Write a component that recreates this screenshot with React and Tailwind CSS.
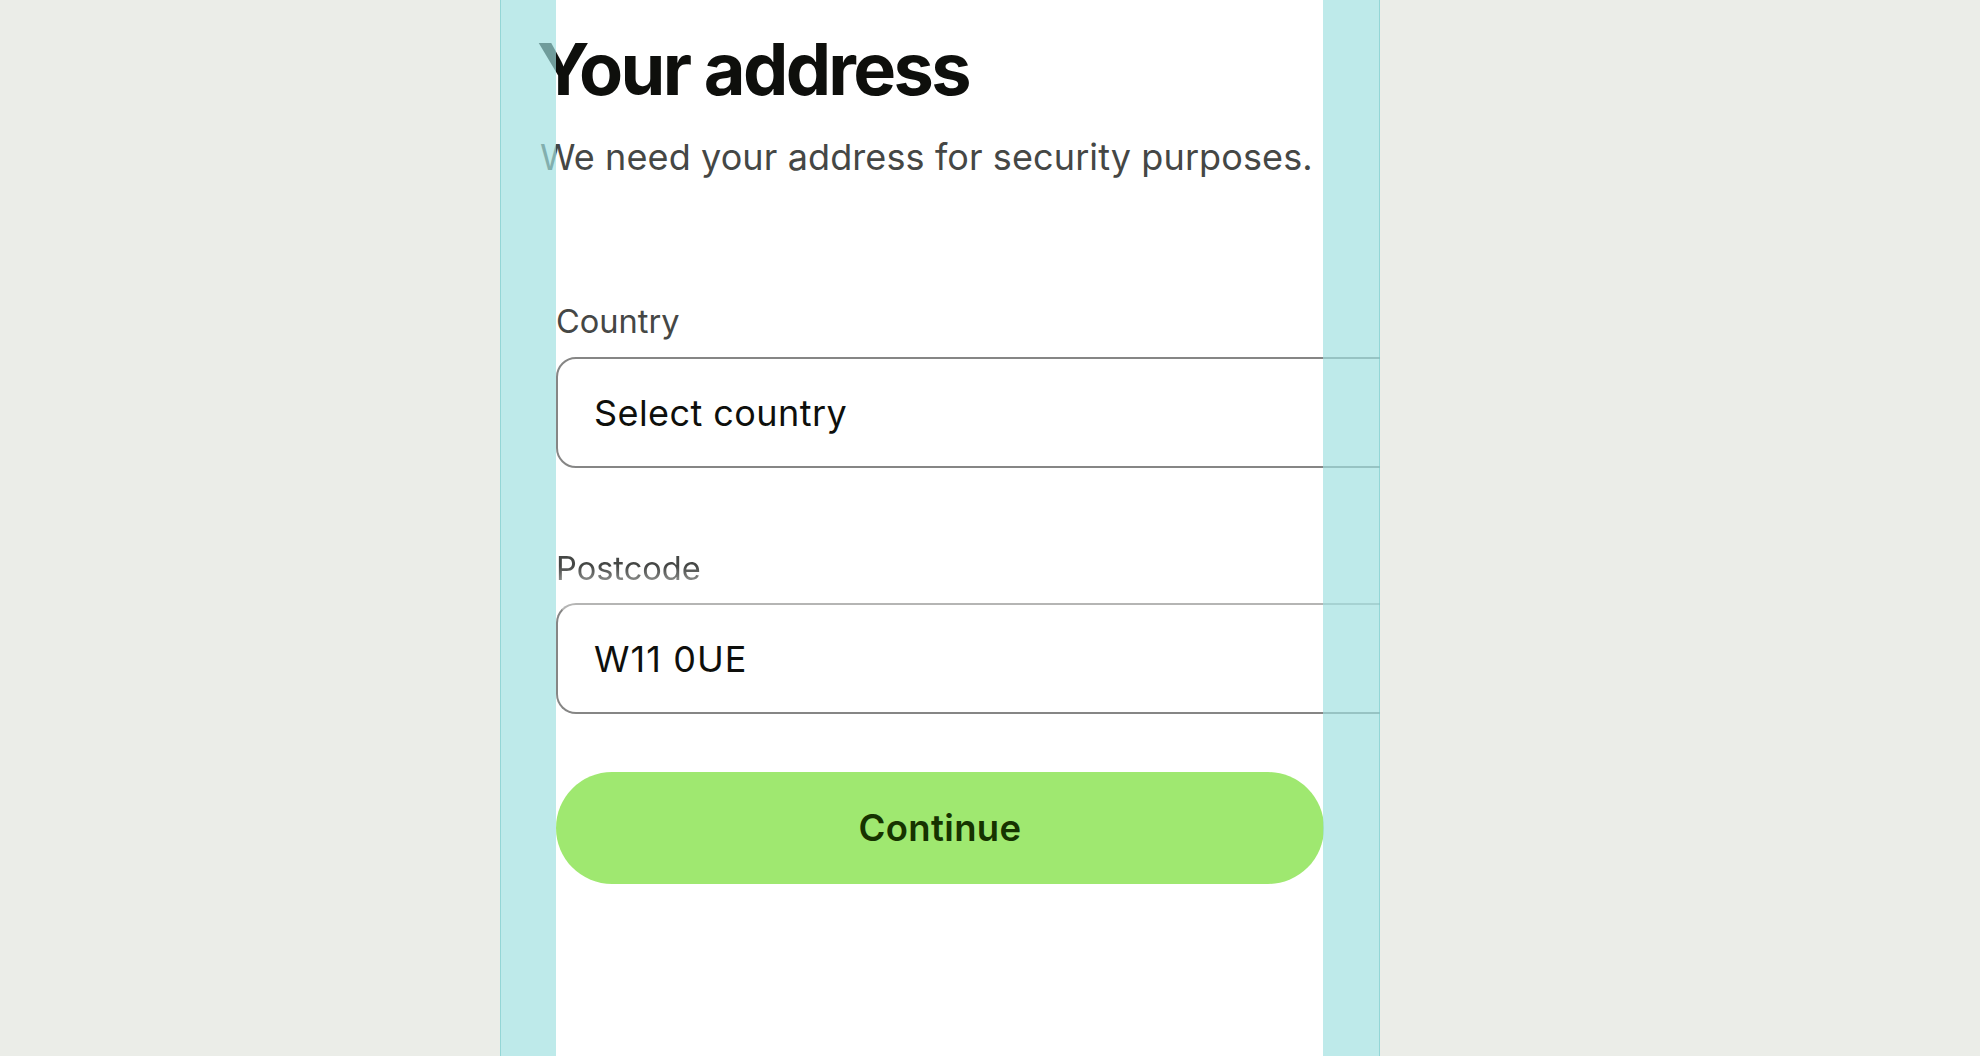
export default function App() {
  return (
    <div className="min-h-screen w-full bg-[#ebede8] flex" style={{ fontFamily: "Inter, 'Noto Sans', sans-serif" }}>
      <div className="ml-[500px] relative w-[880px] h-[1056px] overflow-hidden bg-white px-[56px]">
        <div className="flex flex-col">
          <h1 className="-ml-[19px] mt-[29px] text-[72px] leading-[80px] font-bold tracking-[-0.037em] text-[#0e0f0c] whitespace-nowrap">
            Your address
          </h1>
          <p className="-ml-4 mt-[24px] text-[36px] leading-[48px] tracking-[0.003em] text-[#454745] whitespace-nowrap">
            We need your address for security purposes.
          </p>

          <label className="mt-[120px] text-[32.6px] leading-[40px] text-[#454745]">Country</label>
          <div className="mt-[16px] w-[900px] h-[111px] rounded-[20px] border-2 border-[#868685] flex items-center pl-[36px] text-[36px] tracking-[0.012em] text-[#0e0f0c]">
            Select country
          </div>

          <label className="mt-[80px] text-[32.6px] leading-[40px] bg-gradient-to-b from-[#454745] from-45% to-[#b0b1af] bg-clip-text text-transparent w-fit">
            Postcode
          </label>
          <div className="mt-[15px] w-[900px] h-[111px] rounded-[20px] border-2 border-[#868685] border-t-[#b5b5b4] flex items-center pl-[36px] text-[36px] tracking-[0.03em] text-[#0e0f0c]">
            W11 0UE
          </div>

          <button className="mt-[58px] w-full h-[112px] rounded-full bg-[#9fe870] text-[#163300] text-[36.5px] tracking-[0.01em] font-semibold">
            Continue
          </button>
        </div>

        <div className="pointer-events-none absolute left-0 top-0 bottom-0 w-[56px] bg-[rgba(159,224,224,0.68)] border-l border-[rgba(120,200,200,0.6)]" />
        <div className="pointer-events-none absolute right-0 top-0 bottom-0 w-[57px] bg-[rgba(159,224,224,0.68)] border-r border-[rgba(120,200,200,0.6)]" />
      </div>
    </div>
  );
}
